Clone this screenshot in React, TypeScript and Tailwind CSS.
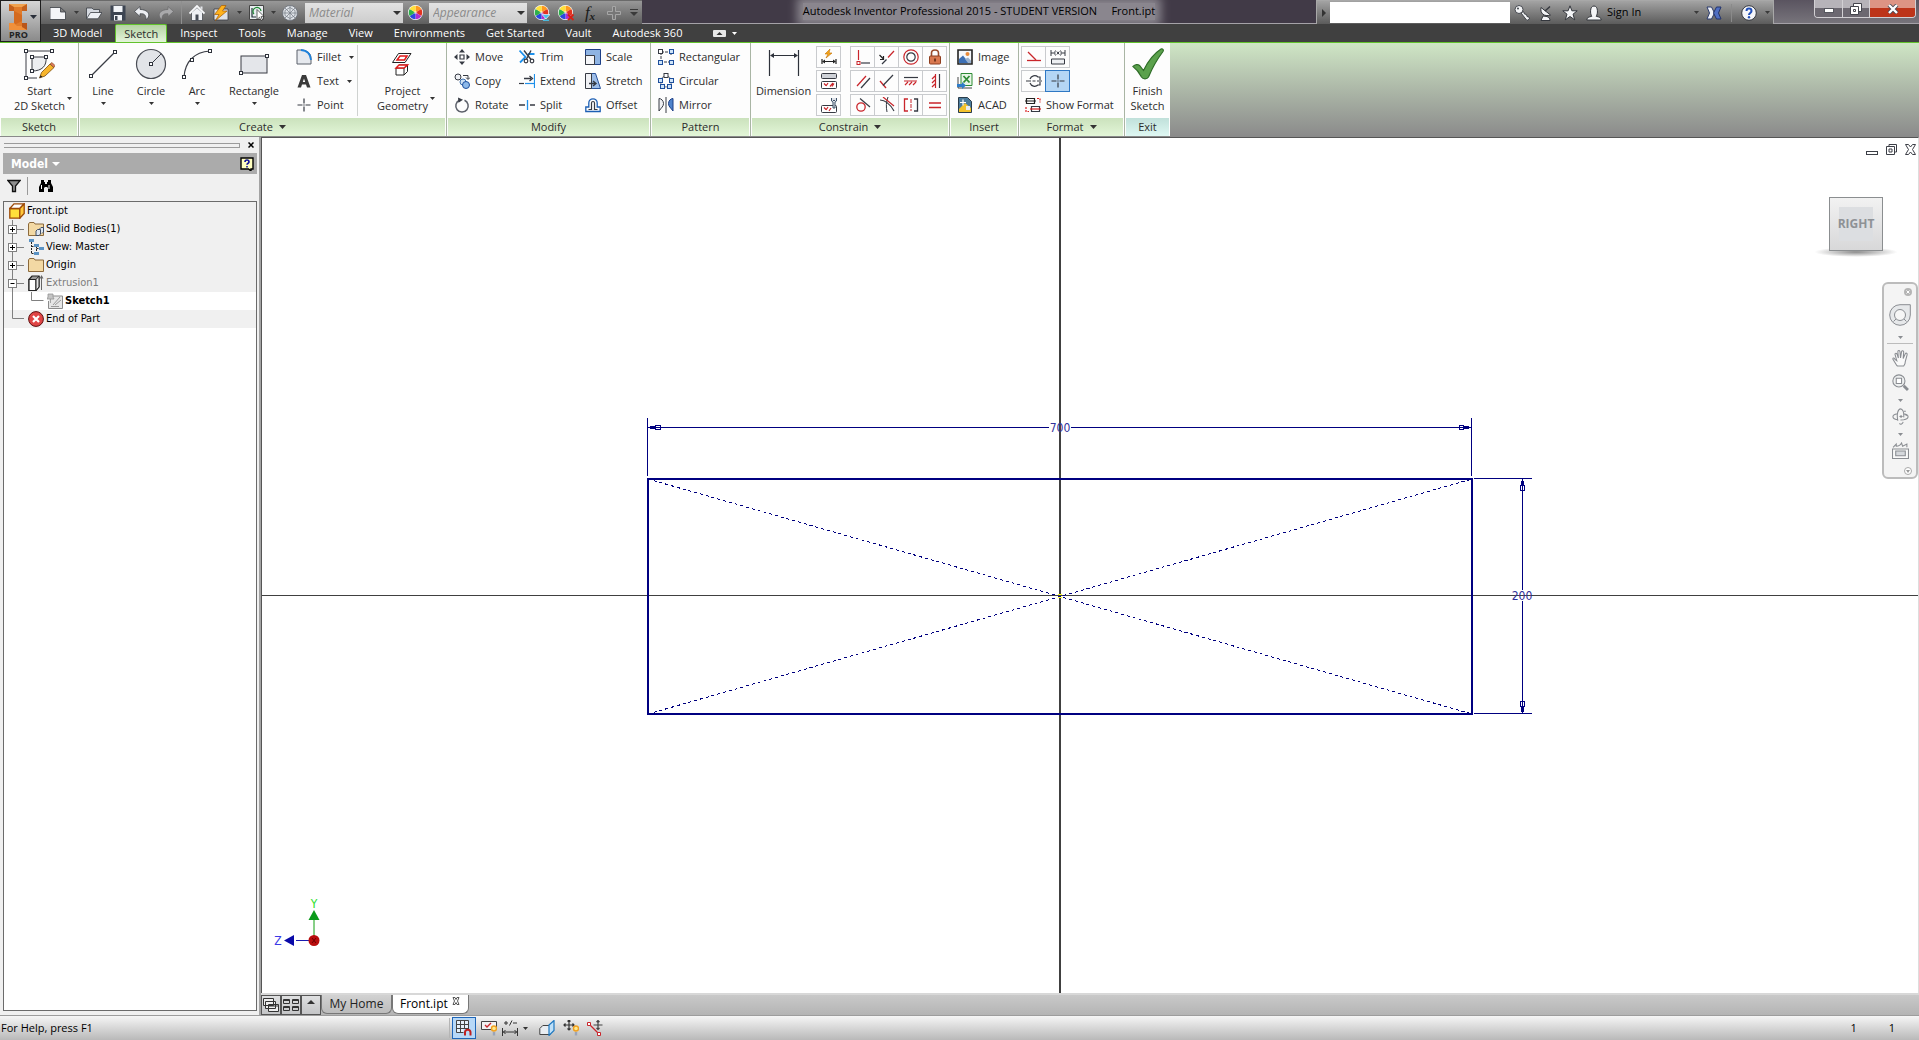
import React from "react";

type IconProps = { children: React.ReactNode; className?: string; box?: string };

function Icon({ children, className = "size-4", box = "0 0 16 16" }: IconProps) {
  return (
    <svg viewBox={box} fill="none" className={`shrink-0 ${className}`} aria-hidden>
      {children}
    </svg>
  );
}

function Caret({ className = "text-[#333]" }: { className?: string }) {
  return (
    <svg viewBox="0 0 5 3" className={`h-[3px] w-[5px] shrink-0 ${className}`} aria-hidden>
      <path d="M0 0h5L2.5 3z" fill="currentColor" />
    </svg>
  );
}

/* ---------- Quick access icons ---------- */

const wheel = (
  <>
    <circle cx="7.5" cy="7.5" r="7.500" fill="#fff" />
    <path d="M7.5 7.5V.8a6.7 6.7 0 0 1 5.8 3.3z" fill="#ff9a1f" />
    <path d="M7.5 7.5l5.8-3.4a6.7 6.7 0 0 1 0 6.8z" fill="#e2331f" />
    <path d="M7.5 7.5l5.8 3.4a6.7 6.7 0 0 1-5.8 3.3z" fill="#b02fd0" />
    <path d="M7.5 7.5v6.7a6.7 6.7 0 0 1-5.8-3.3z" fill="#2b49e0" />
    <path d="M7.5 7.5l-5.8 3.4a6.7 6.7 0 0 1 0-6.8z" fill="#2fb04b" />
    <path d="M7.5 7.5L1.7 4.1A6.7 6.7 0 0 1 7.5.8z" fill="#ffe23a" />
    <circle cx="7.5" cy="7.5" r="1.600" fill="#fff" opacity=".5" />
  </>
);

const qat = {
  fresh: (
    <path d="M0 2.500h10.500l5 4.500V14.500H0zM10.500 2.500V7h5" fill="#f4f5f8" stroke="#3a3d44" strokeWidth=".8" />
  ),
  open: (
    <>
      <path d="M.5 13.500V3h5.500l1.500 1.500h6V8" fill="#d5d9e0" stroke="#3a3d44" strokeWidth=".8" />
      <path d="M.5 13.800L4.500 7.500H16L12 13.800z" fill="#eceff4" stroke="#3a3d44" strokeWidth=".8" />
    </>
  ),
  save: (
    <>
      <path d="M.5.5h15v15H.5z" fill="#3d4552" />
      <path d="M3.500 1h9v6h-9zM4 10h8v5.500H4z" fill="#f2f4f8" />
      <path d="M5 11h2.500v4H5z" fill="#3d4552" />
    </>
  ),
  undo: (
    <path d="M6 1.500L.5 6.500l5.500 5V8.800c4-.4 6 .8 6 5.700 4-2 5-9.500-6-10.100z" fill="#eceef2" stroke="#3a3d44" strokeWidth=".7" />
  ),
  redo: (
    <path d="M10 1.500l5.500 5-5.500 5V8.800c-4-.4-6 .8-6 5.700C0 12.500-1 5 10 4.400z" fill="#a9a9ab" stroke="#6a6a6c" strokeWidth=".7" />
  ),
  home: (
    <>
      <path d="M2.500 7.500V15.500h11V7.500L8 2.500z" fill="#eef0f4" stroke="#3a3d44" strokeWidth=".7" />
      <path d="M.5 8.500L8 1l7.500 7.500" stroke="#f8f9fb" strokeWidth="1.800" />
      <path d="M6.500 9.500h3v6h-3z" fill="#444a55" />
      <path d="M11.500 1.500h2V5l-2-2z" fill="#e4e6ea" />
    </>
  ),
  update: (
    <>
      <path d="M1 4h14v11H1z" fill="#dfe2e8" stroke="#3a3d45" strokeWidth=".8" />
      <path d="M8.500.5h4.500L9.500 6H14L2.500 15.500 6 9.500H1.500z" fill="#ffb21c" stroke="#a85a00" strokeWidth=".7" />
    </>
  ),
  select: (
    <>
      <path d="M.5.5h14v14H.5z" fill="#e9edf0" stroke="#444" />
      <path d="M3 3v9h4" stroke="#22313a" strokeWidth="1.200" />
      <path d="M5 9a4 4 0 1 1 7-3" stroke="#1c8a33" strokeWidth="1.200" />
      <path d="M8 4.500l7 7-3 .2 1.500 3-1.500.8-1.500-3.200L8 14.500z" fill="#fff" stroke="#222" strokeWidth=".7" />
    </>
  ),
  sphere: (
    <>
      <circle cx="8" cy="8" r="7.500" fill="#dfe3e8" stroke="#666b73" strokeWidth=".8" />
      <path d="M3 3l10 10M13 3L3 13M8 .5v15M.5 8h15M3 5.500l5-3 5 3v5l-5 3-5-3z" stroke="#7c838c" strokeWidth=".8" />
    </>
  ),
  adjust: (
    <>
      {wheel}
      <path d="M8 9.500h8L12 14z" fill="#48c4ee" stroke="#fff" strokeWidth=".6" />
      <path d="M9 15.300h6" stroke="#48c4ee" strokeWidth="1.200" />
    </>
  ),
  clear: (
    <>
      {wheel}
      <path d="M10 9.500l5.500 5.500M15.500 9.500L10 15" stroke="#d81f12" strokeWidth="1.800" />
    </>
  ),
  plus: <path d="M6.500 1.500h3v5h5v3h-5v5h-3v-5h-5v-3h5z" fill="#777" stroke="#a6a6a6" strokeWidth="1" />,
};

/* ---------- Ribbon icons ---------- */

const node = (x: number, y: number) => (
  <rect x={x - 1.500} y={y - 1.500} width="3" height="3" fill="#fff" stroke="#2e323b" strokeWidth="1" />
);
const square = (x: number, y: number) => (
  <rect x={x - 1.500} y={y - 1.500} width="4" height="4" fill="#cfe4f8" stroke="#1d4e9c" strokeWidth="1" />
);

const big = {
  sketch: (
    <>
      <path d="M29 3H3v27h11" stroke="#3a3d45" />
      <path d="M9 9h14c1 9-4 14-14 14z" fill="#eceef1" stroke="#3a3d45" />
      {node(3, 3)}{node(29, 3)}{node(3, 30)}{node(9, 9)}{node(23, 9)}{node(9, 23)}
      <path d="M16.500 30l2-5.500L27 16l4 3.500-9 8.500z" fill="#f7b52c" stroke="#7a4c10" strokeWidth=".8" />
      <path d="M27 16l2-1.500 3 3L31 19.500z" fill="#e0795f" stroke="#7a4c10" strokeWidth=".6" />
      <path d="M16.500 30l1-2.800 2 1.600z" fill="#222" />
    </>
  ),
  line: <><path d="M4 28L28 4" stroke="#3a3d45" strokeWidth="1.200" />{node(4, 28)}{node(28, 4)}</>,
  circle: (
    <>
      <circle cx="16" cy="16" r="14.500" fill="#e2e4e8" stroke="#4a4d55" strokeWidth="1.200" />
      <path d="M16 16L26 6" stroke="#3a3d45" />
      {node(16, 16)}
    </>
  ),
  arc: <><path d="M3 29C4 14 13 4 29 3" stroke="#3a3d45" strokeWidth="1.200" />{node(3, 29)}{node(11, 12)}{node(29, 3)}</>,
  rect: <><rect x="3" y="8" width="26" height="17" fill="#e4e6ea" stroke="#3a3d45" />{node(3, 25)}{node(29, 8)}</>,
  project: (
    <>
      <path d="M12.500 5.500H25l-6 9H6.500z" fill="#fff" stroke="#222" />
      <path d="M14 8h7l-2.500 4h-7.500z" fill="#fff" stroke="#e01818" strokeWidth="1.500" />
      <path d="M10 20h8v7h-8zM10 20l3-3h8.500L18 20M21.500 17v6.500L18 27" fill="#fff" stroke="#222" />
      <path d="M10 20h8l3.500-3H13z" fill="#fff" stroke="#e01818" strokeWidth="1.400" />
    </>
  ),
  dimension: (
    <>
      <path d="M1.500 2v26M30.500 2v26M3 7.500h26" stroke="#2e323b" strokeWidth="1.200" />
      <path d="M2 7.500L6 5v5zM30 7.500L26 5v5z" fill="#2e323b" />
    </>
  ),
  check: (
    <path
      d="M1 18.500c2-2 5-2.500 6.500-1l4 5C16 13 22 5.500 29 1c1.500-.8 3 .8 2 2.500-6 8-11 17-14.500 25.500-1.500 2.500-5.500 2.500-7 0C7.500 25 5 21.500 1 18.500z"
      fill="#5ba14c"
      stroke="#2f6d28"
      strokeWidth="1.200"
    />
  ),
};

const ink = "#363a43";
const small: Record<string, React.ReactNode> = {
  Fillet: (
    <>
      <path d="M1 1h6c5 1 8 4 8 8v6H1z" fill="#e6e9ee" stroke="#5b606b" />
      <path d="M5 1c6 .4 9.500 4 10 10" stroke="#1e82dc" strokeWidth="1.800" />
    </>
  ),
  Text: <path d="M6 2h4l4.500 12.500H11l-1-3H6l-1 3H1.500zM8 5.500L6.800 9h2.400z" fill="#3a3a3a" />,
  Point: <path d="M8 1.500v5M8 9.500v5M1.500 8h5M9.500 8h5M7.300 8h1.400" stroke={ink} strokeWidth="1.200" />,
  Move: (
    <>
      <path d="M6 6h4v4H6z" stroke={ink} strokeWidth="1.200" />
      <path d="M8 0l3 3.500H5zM8 16l3-3.500H5zM0 8l3.500-3v6zM16 8l-3.500-3v6z" fill={ink} />
    </>
  ),
  Copy: (
    <>
      <circle cx="4" cy="4" r="3" fill="#eef0f4" stroke={ink} />
      <path d="M9 2.500h5v3.500M12 4.500l2 2 2-2" stroke={ink} />
      <circle cx="9" cy="9" r="3" fill="#cfe2f6" stroke="#3c6fae" />
      <circle cx="12" cy="12" r="3.500" fill="#8db9ea" stroke="#1d4e9c" />
    </>
  ),
  Rotate: (
    <>
      <path d="M5.500 3.200a6.200 6.200 0 1 0 5 0" stroke="#5c606a" strokeWidth="1.500" />
      <path d="M4 .5l5 2.300-4.500 3z" fill={ink} />
    </>
  ),
  Trim: (
    <>
      <path d="M.5 1.500l6 6.500-5.500 5.500" stroke="#1e90ea" strokeWidth="1.800" />
      <path d="M9 5h6.500" stroke="#1e90ea" strokeWidth="2" />
      <path d="M5 1.500l7 9M12 1.500L7.500 10" stroke={ink} strokeWidth="1.400" />
      <circle cx="7" cy="12" r="1.800" stroke={ink} strokeWidth="1.200" />
      <circle cx="13" cy="12" r="1.800" stroke={ink} strokeWidth="1.200" />
    </>
  ),
  Extend: (
    <>
      <path d="M15.500 1v14" stroke="#1e90ea" strokeWidth="1.200" />
      <path d="M0 10.500h5" stroke={ink} strokeWidth="1.200" />
      <path d="M6 10.500h9" stroke="#1e90ea" strokeWidth="1.200" />
      <path d="M5 5.500h7M10.500 3l3 2.500-3 2.500" stroke={ink} strokeWidth="1.300" />
    </>
  ),
  Split: (
    <>
      <path d="M0 8h6M11 8h5" stroke={ink} strokeWidth="1.300" />
      <path d="M8.500 3v10" stroke="#1e90ea" strokeWidth="1.300" />
    </>
  ),
  Scale: (
    <>
      <path d="M.5.500h15v15H.5z" fill="#8fb4e3" stroke="#1d3f86" />
      <path d="M.5 6.500h9v9h-9z" fill="#f4f5f8" stroke={ink} />
    </>
  ),
  Stretch: (
    <>
      <path d="M6 .5h4.500L15.500 15.500H6z" fill="#9dbde8" stroke="#2a5299" />
      <path d="M.5.500h6v15h-6z" fill="#f0f1f4" stroke={ink} />
      <path d="M4 10.500h6M8 8l3 2.500L8 13" stroke={ink} strokeWidth="1.400" />
    </>
  ),
  Offset: (
    <>
      <path d="M.8 14.500V10h3V6a4.200 4.200 0 0 1 8.400 0v4h3v4.500z" stroke="#1d5fb4" strokeWidth="1.300" />
      <path d="M3.500 12.500h3V6a1.500 1.500 0 0 1 3 0v6.500h3" stroke={ink} strokeWidth="1.200" />
    </>
  ),
  Rectangular: (
    <>
      <path d="M3 3h10M3 3v10M13 13H6M13 3v3" stroke={ink} strokeDasharray="3 1" />
      <rect x=".5" y=".5" width="4" height="4" fill="#fff" stroke={ink} />
      {square(13, 2)}{square(2, 13)}{square(13, 13)}
    </>
  ),
  Circular: (
    <>
      <circle cx="8" cy="8.500" r="5.500" stroke="#6b7079" />
      <rect x="6" y=".5" width="4" height="4" fill="#fff" stroke={ink} />
      {square(2, 7)}{square(13, 7)}{square(4, 13)}{square(11, 13)}
    </>
  ),
  Mirror: (
    <>
      <path d="M1 1.500c2 0 4.500 2 4.500 5s-2 4-4.500 7.500z" fill="#f0f1f4" stroke={ink} />
      <path d="M8 0v16" stroke={ink} />
      <path d="M15 1.500c-2 0-4.500 2-4.500 5s2 4 4.500 7.500z" fill="#4f83cc" stroke="#1d3f86" />
    </>
  ),
  Image: (
    <>
      <path d="M1 1h14v14H1z" fill="#f6f8fb" stroke="#222" strokeWidth="1.600" />
      <path d="M2 10l4-3.500L12 14H2z" fill="#3c6fb4" />
      <path d="M8 10l3-1.500 3 3V14h-3z" fill="#9ab2cf" />
      <circle cx="10.500" cy="5" r="2" fill="#e88a3a" />
    </>
  ),
  Points: (
    <>
      <path d="M4 .500h11v12H4z" fill="#e8f5e6" stroke="#2c8a33" />
      <path d="M6.500 3l6 6.500M12.500 3l-6 6.500" stroke="#2c8a33" strokeWidth="1.800" />
      <path d="M1 4v11h14" stroke="#444" />
      <path d="M0 11h5V9l4 3.500L5 16v-2H0z" fill="#2e7cc8" />
    </>
  ),
  ACAD: (
    <>
      <path d="M1.500.500h9l4 4v11h-13z" fill="#4c7c9d" stroke="#2a3c4a" />
      <path d="M2 12l6-6 6 5v4H2z" fill="#f2c22c" />
      <path d="M6 2.500v6M3 5.500h6" stroke="#fff" strokeWidth="1.200" />
      <path d="M9 9h4v4H9z" fill="#e9ecef" />
    </>
  ),
  "Show Format": (
    <>
      <path d="M1.500 1.500h8v5h-8zM0 4h11" stroke="#222" strokeWidth="1.200" />
      <path d="M6.500 9.500h8v5h-8z" stroke={ink} strokeWidth="1.200" />
      <path d="M5 12h11" stroke="#d91e1e" strokeWidth="1.200" />
      <path d="M12 1.500h3v4M1 10v4.500h3" stroke="#d91e1e" strokeWidth="1.200" strokeDasharray="2 1" />
    </>
  ),
};

const red = "#c9252b";
const lock = (
  <>
    <path d="M4.500 7V4a3.500 3 0 0 1 7 0v3" stroke="#9a4a2a" strokeWidth="1.600" />
    <rect x="2.500" y="7" width="11" height="8" rx="1" fill="#d9784f" stroke="#8f3f20" />
    <path d="M8 9.500v3" stroke="#4a1c0a" strokeWidth="1.400" />
  </>
);

const constrainSide: [string, React.ReactNode][] = [
  ["Auto dimension", <>
    <path d="M9 0L4 5h3l-2 4 6-5H8z" fill="#f6a81c" stroke="#c46e00" strokeWidth=".6" />
    <path d="M1 10v5M15 10v5M2 12.500h12" stroke="#222" strokeWidth="1.200" />
    <path d="M1 12.500l3-2v4zM15 12.500l-3-2v4z" fill="#222" />
  </>],
  ["Show constraints", <>
    <rect x=".5" y=".5" width="15" height="5" rx="1" fill="#cfd2d8" stroke={ink} />
    <rect x=".5" y="8.500" width="15" height="7" rx="1" fill="#fff" stroke={ink} />
    <path d="M3 10.500l2 2M7 10l-2 3M12 10l-3 3.500M13 10.500l-2 3" stroke={red} strokeWidth="1.200" />
  </>],
  ["Constraint settings", <>
    <rect x=".5" y="8.500" width="15" height="7" rx="1" fill="#fff" stroke={ink} />
    <path d="M3 10.500l2 2M7 10l-2 3M10 11l-2 3" stroke={red} strokeWidth="1.200" />
    <path d="M10.500 1v3l1.500 1v6h2V5l1.500-1V1M12 3.500h2" fill="#dfe2e8" stroke="#3b5067" strokeWidth="1" />
  </>],
];

const constraints: [string, React.ReactNode][][] = [
  [
    ["Coincident", <><path d="M3.500 1v10" stroke={red} strokeWidth="1.200" /><path d="M6 14h9" stroke={ink} strokeWidth="1.200" /><rect x="2" y="12.500" width="3" height="3" stroke={red} /></>],
    ["Collinear", <><path d="M.5 6l4 4M4.500 7v3.500H1" stroke="#222" strokeWidth="1.200" /><path d="M3 15l4.500-4.500" stroke={ink} strokeWidth="1.200" /><path d="M9 8.500L15 2" stroke={red} strokeWidth="1.200" /></>],
    ["Concentric", <><circle cx="8" cy="8" r="7.200" stroke={red} strokeWidth="1.200" /><circle cx="8" cy="8" r="4.200" stroke={ink} strokeWidth="1.200" /></>],
    ["Fix", lock],
  ],
  [
    ["Parallel", <><path d="M2 13L11 3" stroke={red} strokeWidth="1.200" /><path d="M6 15l9-10" stroke={ink} strokeWidth="1.200" /></>],
    ["Perpendicular", <><path d="M1 8l6 7" stroke={red} strokeWidth="1.300" /><path d="M4 12.500L14 2" stroke={ink} strokeWidth="1.200" /></>],
    ["Horizontal", <><path d="M1 4.500h14" stroke={ink} strokeWidth="1.200" /><path d="M1 8h13M5 9l-3 3M9 9l-3 3M13 9l-3 3" stroke={red} strokeWidth="1.200" /></>],
    ["Vertical", <><path d="M12.500 1v14" stroke={ink} strokeWidth="1.200" /><path d="M8.500 1v14M8 3L5 6M8 7l-3 3M8 11l-3 3" stroke={red} strokeWidth="1.200" /></>],
  ],
  [
    ["Tangent", <><circle cx="6" cy="10" r="4.200" stroke={red} strokeWidth="1.300" /><path d="M5 1.500L15 10" stroke={ink} strokeWidth="1.200" /></>],
    ["Smooth", <><path d="M1 3c6 0 10 4 14 11" stroke={ink} strokeWidth="1.200" /><path d="M9 0c-2 5-2 10-1 15" stroke={ink} /><path d="M4 0l11 9" stroke={red} strokeWidth="1.200" /></>],
    ["Symmetric", <><path d="M5 2H1.500v12H5" stroke={red} strokeWidth="1.300" /><path d="M11 2h3.500v12H11" stroke={ink} strokeWidth="1.300" /><path d="M8 2v12" stroke={red} strokeDasharray="4 1" /></>],
    ["Equal", <path d="M2 6h12M2 10.500h12" stroke={red} strokeWidth="1.300" />],
  ],
];

const formats: [string, React.ReactNode][][] = [
  [
    ["Construction", <><path d="M2 3l8 8" stroke={red} strokeWidth="1.300" /><path d="M1 11.500h14" stroke={red} strokeWidth="1.300" /></>],
    ["Driven dimension", <><path d="M1 1v6M15 1v6M1 4h3M12 4h3M5.500 1.500C4.500 3 4.500 5 5.500 6.500M10.500 1.500c1 1.500 1 3.500 0 5M6.800 2.500l2.500 3M9.300 2.500l-2.500 3" stroke={ink} /><path d="M1.500 10h13v5h-13z" fill="#eef0f3" stroke={ink} /></>],
  ],
  [
    ["Centerline", <><path d="M4 6a5 5 0 0 1 8-2h2v3M4 10a5 5 0 0 0 8 2h2V9" stroke={ink} strokeWidth="1.200" /><path d="M0 8h5M6.500 8h3M11 8h5" stroke={ink} strokeWidth="1.200" /></>],
    ["Center point", <path d="M8 1.500v5M8 9.500v5M1.500 8h5M9.500 8h5M7.300 8h1.400" stroke={ink} strokeWidth="1.200" />],
  ],
];

/* ---------- Ribbon pieces ---------- */

type PanelProps = { title: string; width: string; menu?: boolean; exit?: boolean; children: React.ReactNode };

function Panel({ title, width, menu, exit, children }: PanelProps) {
  return (
    <section className={`flex shrink-0 flex-col bg-[#fdfdfd] ${exit ? "" : "border-r border-[#a9b5a4]"} ${width}`}>
      <div className="flex h-[75px]">{children}</div>
      <h2
        className={`mx-px flex h-[18px] items-center justify-center gap-1.5 bg-linear-to-b ${
          exit ? "from-[#c0e0da] to-[#dff8f3]" : "from-[#cbe2bd] to-[#e3f6d8]"
        }`}
      >
        {title}
        {menu && (
          <svg viewBox="0 0 7 4" className="h-1 w-[7px]" aria-hidden>
            <path d="M0 0h7L3.500 4z" fill="#333" />
          </svg>
        )}
      </h2>
    </section>
  );
}

type LargeProps = { icon: React.ReactNode; lines: string[]; width: string; menu?: "below" | "side" };

function LargeButton({ icon, lines, width, menu }: LargeProps) {
  return (
    <button className={`flex shrink-0 flex-col items-center pt-[5px] ${width}`}>
      <Icon box="0 0 32 32" className="size-8">{icon}</Icon>
      <span className={`mt-[3px] flex items-center gap-0.5 leading-[15px] ${menu === "side" ? "pl-2" : ""}`}>
        <span>
          {lines.map((line) => (
            <span key={line} className="block whitespace-nowrap">{line}</span>
          ))}
        </span>
        {menu === "side" && <Caret />}
      </span>
      {menu === "below" && <span className="mt-1"><Caret /></span>}
    </button>
  );
}

function SmallButton({ name, menu }: { name: string; menu?: boolean }) {
  return (
    <button className="flex h-6 items-center gap-[5px] whitespace-nowrap">
      <Icon>{small[name]}</Icon>
      {name}
      {menu && <span className="ml-[3px]"><Caret /></span>}
    </button>
  );
}

function ToolGrid({ rows, active }: { rows: [string, React.ReactNode][][]; active?: string }) {
  return (
    <>
      {rows.map((row, i) => (
        <div key={i} className="flex h-[22px]">
          {row.map(([label, icon]) => (
            <button
              key={label}
              aria-label={label}
              className={`-mr-px flex w-[25px] items-center justify-center border ${
                label === active ? "z-10 border-[#2f78c4] bg-[#b4d6f5]" : "border-[#c9cbce]"
              }`}
            >
              <Icon>{icon}</Icon>
            </button>
          ))}
        </div>
      ))}
    </>
  );
}

/* ---------- Header ---------- */

function QatButton({ label, children }: { label: string; children: React.ReactNode }) {
  return (
    <button aria-label={label} className="flex w-6 items-center justify-center">
      <Icon>{children}</Icon>
    </button>
  );
}

function QatCaret({ label, width = "w-3" }: { label: string; width?: string }) {
  return (
    <button aria-label={label} className={`flex items-center justify-center ${width}`}>
      <Caret className="text-[#3a3a3a]" />
    </button>
  );
}

function StyleSelect({ name }: { name: string }) {
  return (
    <span className="relative flex">
      <select
        aria-label={name}
        className="h-5 w-[98px] appearance-none bg-linear-to-b from-[#e2e2e2] to-[#cdcdcd] pl-1 text-[12px] text-[#8b8b8b] italic"
      >
        <option>{name}</option>
      </select>
      <svg viewBox="0 0 8 4" className="pointer-events-none absolute top-2 right-0.5 h-1 w-2" aria-hidden>
        <path d="M0 0h8L4 4z" fill="#333" />
      </svg>
    </span>
  );
}

function QuickAccess() {
  return (
    <div className="flex h-6 items-stretch border-t border-[#6a6a6a] bg-linear-to-b from-[#989898] to-[#5f5f5f] pl-[5px]">
      <QatButton label="New">{qat.fresh}</QatButton>
      <QatCaret label="New options" />
      <QatButton label="Open">{qat.open}</QatButton>
      <QatButton label="Save">{qat.save}</QatButton>
      <QatButton label="Undo">{qat.undo}</QatButton>
      <QatButton label="Redo">{qat.redo}</QatButton>
      <span className="mx-[3px] w-px bg-[#8f8f8f]" />
      <QatButton label="Home">{qat.home}</QatButton>
      <QatButton label="Update">{qat.update}</QatButton>
      <QatCaret label="Update options" />
      <QatButton label="Select">{qat.select}</QatButton>
      <QatCaret label="Select options" width="w-2" />
      <div className="flex items-stretch pl-px">
        <QatButton label="Material browser">{qat.sphere}</QatButton>
      </div>
      <div className="flex items-center pr-[3px] pl-[3px]">
        <StyleSelect name="Material" />
        <span className="flex w-[26px] justify-center">
          <QatButton label="Appearance browser">{wheel}</QatButton>
        </span>
        <StyleSelect name="Appearance" />
      </div>
      <QatButton label="Adjust">{qat.adjust}</QatButton>
      <QatButton label="Clear">{qat.clear}</QatButton>
      <button className="w-6 font-['Liberation_Serif',serif] text-[17px] leading-5 text-[#1b1b1b] italic">
        f<sub className="text-[11px] font-bold">x</sub>
      </button>
      <QatButton label="Add">{qat.plus}</QatButton>
      <button aria-label="Customize" className="flex w-4 flex-col items-center justify-center gap-0.5">
        <span className="h-px w-2 bg-[#3a3a3a]" />
        <svg viewBox="0 0 8 4" className="h-1 w-2" aria-hidden><path d="M0 0h8L4 4z" fill="#3a3a3a" /></svg>
      </button>
    </div>
  );
}

function InfoCenter() {
  return (
    <div className="flex h-6 w-[458px] items-center border-x border-t border-[#a8a8a8] bg-linear-to-b from-[#a3a3a3] to-[#5c5c5c]">
      <button aria-label="Collapse search" className="flex w-[13px] justify-center">
        <svg viewBox="0 0 4 8" className="h-2 w-1" aria-hidden><path d="M0 0l4 4-4 4z" fill="#333" /></svg>
      </button>
      <input aria-label="Search help" className="h-[21px] w-[180px] bg-white px-1" />
      <div className="flex flex-1 items-center">
        <QatButton label="Search">
          <circle cx="5" cy="4.500" r="4" fill="#f4f5f7" stroke="#44474e" />
          <path d="M7 8l6 7.500 2.500-1.500-.5-2-2-.5-.5-2-2-.5-1-2.500z" fill="#f4f5f7" stroke="#44474e" />
          <circle cx="4" cy="3.500" r="1" fill="#44474e" />
        </QatButton>
        <QatButton label="Subscription">
          <path d="M3 2.500c-1 6 3 9.500 9.500 7.500z" fill="#f4f5f7" stroke="#33363c" />
          <path d="M7 6l5-4.500" stroke="#33363c" strokeWidth="1.400" />
          <path d="M5 11l-2 4.500h9c0-2-1-3-3-4z" fill="#f4f5f7" stroke="#33363c" />
        </QatButton>
        <QatButton label="Favorites">
          <path d="M8 .8l1.900 5h5.300L11 9.200l1.700 5.600L8 11.500l-4.700 3.300L5 9.200.8 5.800h5.300z" fill="#f4f5f7" stroke="#33363c" />
        </QatButton>
        <button className="flex flex-1 items-center gap-[5px] pl-1 text-black">
          <Icon>
            <path d="M.8 15c0-2.500 2-3 5-3.700C4 9 3.700 1 8 1s4 8 2.200 10.300c3 .7 5 1.200 5 3.700z" fill="#f4f5f7" stroke="#33363c" />
          </Icon>
          Sign In
        </button>
        <QatCaret label="Account options" />
        <QatButton label="Exchange apps">
          <path d="M1 2h4.500l3 6-3 6H1l2.500-6z" fill="#eef0f6" stroke="#2b3b6e" />
          <path d="M15 2h-4.500l-3 6 3 6H15l-2.500-6z" fill="#4f6ec2" stroke="#22326b" />
        </QatButton>
        <span className="mx-[5px] h-[18px] w-px bg-[#8a8a8a]" />
        <QatButton label="Help">
          <circle cx="8" cy="8" r="7.300" fill="#f6f7fa" stroke="#33363c" />
          <path d="M5.500 6c0-3.300 5-3.300 5 0 0 2-2.500 2-2.500 4" stroke="#2350b8" strokeWidth="2" />
          <circle cx="8" cy="12.300" r="1.200" fill="#2350b8" />
        </QatButton>
        <QatCaret label="Help options" />
      </div>
    </div>
  );
}

function WindowButtons() {
  return (
    <div className="mr-[3px] ml-10 flex h-[18px] overflow-hidden rounded-b-sm border-x border-b border-[#d2d0d4]">
      <button aria-label="Minimize" className="flex w-[28px] items-end justify-center border-r border-[#d2d0d4] bg-linear-to-b from-[#b6b3b9] from-50% to-[#6c6871] to-50% pb-1">
        <Icon className="h-[5px] w-2.5" box="0 0 10 5"><rect x=".5" y=".5" width="9" height="4" fill="#fff" stroke="#55565e" /></Icon>
      </button>
      <button aria-label="Restore" className="flex w-[27px] items-center justify-center border-r border-[#d2d0d4] bg-linear-to-b from-[#b6b3b9] from-50% to-[#6c6871] to-50%">
        <Icon className="size-3" box="0 0 12 12"><path d="M3.500.500h8v8h-8z" fill="#fff" stroke="#44454d" /><path d="M.5 3.500h8v8h-8z" fill="#fff" stroke="#44454d" /><path d="M3.500 6.500h2v2h-2z" stroke="#44454d" /></Icon>
      </button>
      <button aria-label="Close" className="flex w-[45px] items-center justify-center bg-linear-to-b from-[#dd9484] from-50% to-[#bd3419] to-50%">
        <Icon className="h-2.5 w-3" box="0 0 12 10">
          <path d="M2 1l8 8M10 1L2 9" stroke="#4a4b55" strokeWidth="4" />
          <path d="M2 1l8 8M10 1L2 9" stroke="#fff" strokeWidth="2.400" />
        </Icon>
      </button>
    </div>
  );
}

const tabs = ["3D Model", "Sketch", "Inspect", "Tools", "Manage", "View", "Environments", "Get Started", "Vault", "Autodesk 360"];

function Header() {
  return (
    <header className="flex border-b border-[#62c22c] bg-[#404040]">
      <button className="flex w-[41px] shrink-0 flex-col items-center border border-[#1e1e1e] bg-linear-to-b from-[#d5d5d5] to-[#8a8a8a] pt-[3px]">
        <span className="flex items-center gap-[3px] pl-1">
          <Icon box="0 0 18 26" className="h-[26px] w-[18px]">
            <path d="M0 0h18v7H0z" fill="#f0a24f" />
            <path d="M0 0l5 3v4H0zM18 0l-5 3v4h5z" fill="#c4601c" />
            <path d="M5 3h8v20H5z" fill="#e07b2a" />
            <path d="M5 7l8 4v6l-8 4z" fill="#d46a1e" />
            <path d="M0 19h5l3 3h5l5-3v7H0z" fill="#f0903a" />
            <path d="M13 19h5v7l-5-3z" fill="#b9561a" />
          </Icon>
          <svg viewBox="0 0 7 4" className="h-1 w-[7px]" aria-hidden><path d="M0 0h7L3.500 4z" fill="#2a2f3a" /></svg>
        </span>
        <span className="pr-1 text-[9px] leading-[9px] font-bold text-[#222]">PRO</span>
      </button>
      <div className="flex min-w-0 flex-1 flex-col">
        <div className="flex h-6 bg-[#413a47]">
          <QuickAccess />
          <h1 className="flex flex-1 items-center justify-center overflow-hidden border-b border-[#a5a2a8] whitespace-pre text-black">
            <span className="bg-[#8a868e] shadow-[0_0_10px_6px_#8a868e]">
              {"Autodesk Inventor Professional 2015 - STUDENT VERSION     Front.ipt"}
            </span>
          </h1>
          <InfoCenter />
          <div className="border-b border-[#a5a2a8] bg-linear-to-b from-[#5a5460] to-[#77747b]">
            <WindowButtons />
          </div>
        </div>
        <nav className="flex h-[18px] items-end gap-px pl-0.5 text-white">
          {tabs.map((tab) => (
            <button
              key={tab}
              className={
                tab === "Sketch"
                  ? "mx-0.5 h-[18px] rounded-t-xs border border-b-0 border-[#62c22c] bg-linear-to-b from-[#b5d3a3] to-[#e4f4da] px-2 leading-4 text-[#2c2c2c]"
                  : "h-[18px] px-2.5 leading-[18px]"
              }
            >
              {tab}
            </button>
          ))}
          <button aria-label="Minimize ribbon" className="ml-5 flex h-[18px] items-center gap-1.5">
            <svg viewBox="0 0 13 7" className="h-[7px] w-[13px]" aria-hidden>
              <rect width="13" height="7" rx="1" fill="#e8e8e8" />
              <path d="M3.500 5L6.500 2l3 3z" fill="#333" />
            </svg>
            <Caret className="text-white" />
          </button>
        </nav>
      </div>
    </header>
  );
}

function Ribbon() {
  return (
    <div className="flex border-b border-[#8a8a8a] bg-linear-to-b from-[#cfe6c5] to-[#8b8b8b]">
      <Panel title="Sketch" width="w-[79px]">
        <LargeButton icon={big.sketch} lines={["Start", "2D Sketch"]} width="w-[78px]" menu="side" />
      </Panel>
      <Panel title="Create" width="w-[368px]" menu>
        <LargeButton icon={big.line} lines={["Line"]} width="w-12" menu="below" />
        <LargeButton icon={big.circle} lines={["Circle"]} width="w-12" menu="below" />
        <LargeButton icon={big.arc} lines={["Arc"]} width="w-11" menu="below" />
        <LargeButton icon={big.rect} lines={["Rectangle"]} width="w-[70px]" menu="below" />
        <div className="my-0.5 w-[76px] border-r border-[#cfd2d0] pl-[7px]">
          <SmallButton name="Fillet" menu />
          <SmallButton name="Text" menu />
          <SmallButton name="Point" />
        </div>
        <LargeButton icon={big.project} lines={["Project", "Geometry"]} width="w-[88px]" menu="side" />
      </Panel>
      <Panel title="Modify" width="w-[204px]">
        <div className="grid flex-1 auto-rows-[24px] grid-cols-[65px_66px_1fr] pt-0.5 pl-[7px]">
          {["Move", "Trim", "Scale", "Copy", "Extend", "Stretch", "Rotate", "Split", "Offset"].map((name) => (
            <SmallButton key={name} name={name} />
          ))}
        </div>
      </Panel>
      <Panel title="Pattern" width="w-[100px]">
        <div className="pt-0.5 pl-[7px]">
          {["Rectangular", "Circular", "Mirror"].map((name) => (
            <SmallButton key={name} name={name} />
          ))}
        </div>
      </Panel>
      <Panel title="Constrain" width="w-[199px]" menu>
        <LargeButton icon={big.dimension} lines={["Dimension"]} width="w-[65px]" />
        <div className="mr-2.5 flex flex-col gap-0.5 pt-[3px]">
          <ToolGrid rows={constrainSide.map((item) => [item])} />
        </div>
        <div className="flex flex-col gap-0.5 pt-[3px]">
          <ToolGrid rows={constraints} />
        </div>
      </Panel>
      <Panel title="Insert" width="w-[69px]">
        <div className="pt-0.5 pl-[7px]">
          {["Image", "Points", "ACAD"].map((name) => (
            <SmallButton key={name} name={name} />
          ))}
        </div>
      </Panel>
      <Panel title="Format" width="w-[106px]" menu>
        <div className="flex flex-col gap-0.5 pt-[3px] pl-0.5">
          <ToolGrid rows={formats} active="Center point" />
          <div className="flex h-[22px] items-center pl-1">
            <SmallButton name="Show Format" />
          </div>
        </div>
      </Panel>
      <Panel title="Exit" width="w-[45px]" exit>
        <LargeButton icon={big.check} lines={["Finish", "Sketch"]} width="w-[45px]" />
      </Panel>
    </div>
  );
}

/* ---------- Model browser ---------- */

function Expander({ open }: { open?: boolean }) {
  return (
    <Icon box="0 0 20 18" className="h-[18px] w-5">
      <path d="M4.500 0v18M9 9.500h7" stroke="#808080" />
      <rect x=".5" y="5.500" width="8" height="8" fill="#fff" stroke="#808080" />
      <path d={open ? "M2.500 9.500h4" : "M2 9.500h5M4.500 7v5"} stroke="#000" />
    </Icon>
  );
}

const folder = <path d="M.5 3V14.500h15V3H7L6 1.500H1.500z" fill="#f3d9a4" stroke="#8c6a3c" />;

const treeIcons = {
  part: (
    <>
      <path d="M.8 5.500h10v9.700H.8z" fill="#ffe03a" stroke="#9c4a08" strokeWidth="1.300" />
      <path d="M.8 5.500L5 .8h10.200l-4.400 4.700z" fill="#fff" stroke="#9c4a08" strokeWidth="1.300" />
      <path d="M10.800 5.500L15.200.8v9.700l-4.400 4.700z" fill="#ffc83a" stroke="#9c4a08" strokeWidth="1.300" />
    </>
  ),
  bodies: (
    <>
      {folder}
      <path d="M8 10l1.500-1.500h3V13l-1.500 1.500H8zM11.500 8l1.500-1.500h2.500V11L14 12.500" fill="#dfe6ef" stroke="#3f4f68" />
    </>
  ),
  view: (
    <>
      <path d="M3.500 3v11M3.500 14.500h2M3.500 7.500h3M8.500 7v7M8.500 14h2M8.500 9.500h3" stroke="#222" strokeDasharray="2 1" />
      <path d="M1 0h5v3H1zM6 5h5v3H6zM11 8h5v3h-5zM6 13h5v3H6z" fill="#5b93c4" />
    </>
  ),
  extrusion: (
    <>
      <path d="M1 4.500L4 1h7v11l-3 3.500H1z" fill="#9a9a9a" stroke="#222" strokeWidth="1.200" />
      <path d="M1 4.500h7v11H1z" fill="#fff" stroke="#222" strokeWidth="1.200" />
      <path d="M8 4.500L11 1v11l-3 3.500z" fill="#e6e6e6" stroke="#222" />
      <path d="M13.500 2v13" stroke="#666" /><path d="M13.500 0l2 3.500h-4z" fill="#666" />
    </>
  ),
  sketch: (
    <>
      <path d="M3 3h12.500v12.500H1.500V8" fill="#e6e6e6" stroke="#8c8c8c" />
      <path d="M4 13.500h8M6 12l7-8M8 12l6-5" stroke="#9b9b9b" />
      <path d="M1 1h5v3l1 2H0l1-2zM3.500 6v4" fill="#c4c4c4" stroke="#949494" strokeWidth=".8" />
    </>
  ),
  end: (
    <>
      <circle cx="8" cy="8" r="7.400" fill="#e04545" stroke="#5e1010" />
      <path d="M5 5l6 6M11 5l-6 6" stroke="#fff" strokeWidth="2.200" />
    </>
  ),
};

function TreeRow({ icon, label, guide, className = "" }: { icon: React.ReactNode; label: string; guide?: React.ReactNode; className?: string }) {
  return (
    <li className={`flex h-[18px] items-center pl-1 ${className || "bg-[#f0f0f0]"}`}>
      {guide}
      <Icon>{icon}</Icon>
      <span className="pt-px pl-0.5">{label}</span>
    </li>
  );
}

function ModelBrowser() {
  return (
    <aside className="flex w-[261px] shrink-0 flex-col border-r-2 border-[#a3a3a3] bg-[#f0f0f0] pt-[3px] pr-px pb-1 pl-[3px] font-['DejaVu_Sans_Condensed',sans-serif] text-[11px] text-black">
      <div className="flex h-2.5 items-center gap-2 pl-px">
        <span className="h-[5px] flex-1 border-y border-r border-[#9b9b9b]" />
        <button aria-label="Close browser" className="mr-1">
          <Icon box="0 0 6 6" className="size-1.5"><path d="M.5.500l5 5M5.500.500l-5 5" stroke="#000" strokeWidth="1.500" /></Icon>
        </button>
      </div>
      <div className="mt-[3px] mr-px flex h-[21px] items-center justify-between bg-[#ababab] pr-[3px] pl-2">
        <button className="flex items-center gap-1 text-[12px] font-bold text-white">
          Model
          <svg viewBox="0 0 8 4" className="h-1 w-2" aria-hidden><path d="M0 0h8L4 4z" fill="#fff" /></svg>
        </button>
        <button aria-label="Browser help">
          <Icon className="size-3.5" box="0 0 14 14">
            <path d="M1 1h12v11h-2v2l-2.500-2H1z" fill="#ffffc0" stroke="#000" strokeWidth="1.400" />
            <path d="M5 5c0-2.600 4-2.600 4 0 0 1.300-2 1.200-2 2.800M7 9v1.600" stroke="#12129a" strokeWidth="1.600" />
          </Icon>
        </button>
      </div>
      <div className="flex h-[27px] items-center gap-1.5 pb-1 pl-1">
        <button aria-label="Filter">
          <Icon className="size-3.5" box="0 0 14 14">
            <path d="M.8 1.500h12.400L8.500 7v5.500h-3V7z" fill="#8e8e8e" stroke="#111" strokeWidth="1.300" />
          </Icon>
        </button>
        <span className="h-[18px] w-px bg-[#9a9a9a]" />
        <button aria-label="Find" className="ml-1">
          <Icon className="size-4">
            <path d="M3 2h3v2h1v2h2V4h1V2h3v3l2 4v5h-5v-4H9.500V9h-3v1H6v4H1V9l2-4z" fill="#000" />
            <path d="M3.500 7v4M11 7v4" stroke="#fff" />
          </Icon>
        </button>
      </div>
      <ul className="mr-px flex-1 border border-[#6b6b6b] bg-white">
        <li className="flex h-[18px] items-center gap-0.5 bg-[#f0f0f0] pl-[5px]">
          <Icon>{treeIcons.part}</Icon>
          <span className="pt-px">Front.ipt</span>
        </li>
        <TreeRow guide={<Expander />} icon={treeIcons.bodies} label="Solid Bodies(1)" />
        <TreeRow guide={<Expander />} icon={treeIcons.view} label="View: Master" />
        <TreeRow guide={<Expander />} icon={folder} label="Origin" />
        <TreeRow guide={<Expander open />} icon={treeIcons.extrusion} label="Extrusion1" className="bg-[#f0f0f0] text-[#7d7d7d]" />
        <TreeRow
          guide={
            <Icon box="0 0 39 18" className="h-[18px] w-[39px]">
              <path d="M4.500 0v18M23.500 0v8.500h12" stroke="#808080" />
            </Icon>
          }
          icon={treeIcons.sketch}
          label="Sketch1"
          className="bg-white font-bold"
        />
        <TreeRow
          guide={
            <Icon box="0 0 20 18" className="h-[18px] w-5">
              <path d="M4.500 0v8.500H16" stroke="#808080" />
            </Icon>
          }
          icon={treeIcons.end}
          label="End of Part"
        />
      </ul>
    </aside>
  );
}

/* ---------- Sketch canvas ---------- */

const navy = "#000080";

function Drawing() {
  return (
    <svg className="absolute inset-0 size-full font-['DejaVu_Sans_Condensed',sans-serif] text-[12px]" fill="none" shapeRendering="crispEdges">
      {/* axes */}
      <path d="M0 457.500H4000" stroke="#404040" />
      <path d="M798 0V4000" stroke="#404040" strokeWidth="2" />

      {/* construction diagonals */}
      <path d="M386 341L1210 576M386 576L1210 341" stroke={navy} strokeDasharray="3 3" />
      <rect x="386" y="341" width="824" height="235" stroke={navy} strokeWidth="2" />
      <path d="M796 456.500h4M796 459.500h4" stroke="#ffff20" />

      {/* horizontal dimension */}
      <path d="M385.500 280v58M1209.500 280v58M386 289.500h401M809 289.500h400" stroke={navy} />
      <path d="M388 288h5v3h-5zM1202 288h5v3h-5z" fill={navy} />
      <path d="M393.500 287.500h5v4h-5zM1197.500 287.500h4v4h-4z" stroke={navy} />
      <text x="798" y="294" textAnchor="middle" fill="#30309a">700</text>

      {/* vertical dimension */}
      <path d="M1212 340.500h58M1212 575.500h58M1260.500 341v111M1260.500 463v113" stroke={navy} />
      <path d="M1259 343h3v5h-3zM1259 569h3v5h-3z" fill={navy} />
      <path d="M1258.500 347.500h4v5h-4zM1258.500 563.500h4v5h-4z" stroke={navy} />
      <text x="1260" y="462" textAnchor="middle" fill="#30309a">200</text>
    </svg>
  );
}

function Triad() {
  return (
    <svg viewBox="0 0 52 56" className="absolute bottom-[42px] left-2.5 h-14 w-[52px] font-['DejaVu_Sans_Condensed',sans-serif] text-[12px]" fill="none" aria-hidden>
      <text x="42" y="13" textAnchor="middle" fill="#2be02b">Y</text>
      <text x="6" y="50" textAnchor="middle" fill="#3a3ae6">Z</text>
      <path d="M42 24v18" stroke="#10a010" />
      <path d="M42 15l5.500 10h-11z" fill="#0a9a1a" />
      <path d="M24 45.500h13" stroke="#1a1ab0" />
      <path d="M12 45.500l10-5.500v11z" fill="#0a0aa8" />
      <circle cx="42" cy="45.500" r="5.500" fill="#b80d0d" />
      <path d="M40 43l4 5M44 43l-4 5" stroke="#6a0000" />
    </svg>
  );
}

function NavBar() {
  return (
    <div className="absolute top-36 right-0 flex w-9 flex-col items-center rounded-md border-2 border-[#bcbcbc] bg-[#f4f4f4] pt-1 pb-0.5 text-[#8a8d92]">
      <button aria-label="Close navigation bar" className="self-end pr-1">
        <Icon box="0 0 8 8" className="size-2"><circle cx="4" cy="4" r="4" fill="#b5b5b5" /><path d="M2.500 2.500l3 3M5.500 2.500l-3 3" stroke="#fff" /></Icon>
      </button>
      <button aria-label="Steering wheel" className="mt-2 flex flex-col items-center gap-2.5">
        <Icon box="0 0 22 22" className="size-[22px]">
          <path d="M11 .700h10.300V11A10.300 10.300 0 1 1 11 .700z" fill="#e6e8ea" stroke="currentColor" />
          <circle cx="11" cy="11" r="5.500" fill="#f6f6f6" stroke="currentColor" />
          <path d="M4.500 17.500L7 15M17.500 17.500L15 15" stroke="currentColor" />
        </Icon>
        <Caret className="text-[#8a8d92]" />
      </button>
      <span className="mt-1 h-px w-[26px] bg-[#bcbcbc]" />
      <button aria-label="Pan" className="mt-1.5">
        <Icon className="size-[17px]">
          <path d="M4.500 14.500L.800 8.500c0-1.400 1.500-1.200 2 .3L4.500 10 2.800 4c0-1.300 1.500-1.300 2 0L6 7.500l-.5-6c.2-1.300 1.600-1.300 2 0L8 7.500l1-6c.4-1.300 1.800-1 2 .3L10.500 8l2-4.500c.7-1 2-.5 1.700 1L12.500 11c0 2-.5 2.500-1.500 4H5z" fill="#fafafa" stroke="currentColor" />
        </Icon>
      </button>
      <button aria-label="Zoom" className="mt-[7px] flex flex-col items-center gap-2">
        <Icon className="size-[17px]">
          <circle cx="6.500" cy="6.500" r="5.700" fill="#eef0f0" stroke="currentColor" />
          <path d="M4 4h5v5H4z" fill="#fff" stroke="currentColor" />
          <path d="M11 11l4 4" stroke="currentColor" strokeWidth="2.600" />
        </Icon>
        <Caret className="text-[#8a8d92]" />
      </button>
      <button aria-label="Orbit" className="mt-1.5 flex flex-col items-center gap-2">
        <Icon className="size-[17px]">
          <path d="M5 5.500C-.5 6.500-.5 10 5 11M11 5.500c5.500 1 5.500 4.500 0 5.500l-3 .3M5.500 12C4 5 6 .800 8 .800s3.500 3 3 8M7 14.500c1 1.500 3 .5 3.500-1.500" stroke="currentColor" />
          <path d="M7 8h3M8.500 6.500v3M11 3h2M12 6l2 1" stroke="currentColor" />
        </Icon>
        <Caret className="text-[#8a8d92]" />
      </button>
      <button aria-label="Look at" className="mt-1.5">
        <Icon className="size-[17px]">
          <path d="M.5 6.500h15v9H.5z" fill="#fafafa" stroke="currentColor" />
          <path d="M3.500 8.500h9v4.500h-9z" fill="#d5d8dc" stroke="currentColor" />
          <path d="M1 5l3-3v2c3 0 4-1 5-3l1 3 4-2v3" stroke="currentColor" />
        </Icon>
      </button>
      <button aria-label="Navigation bar options" className="mt-2 self-end pr-1">
        <Icon box="0 0 8 8" className="size-2"><circle cx="4" cy="4" r="3.500" fill="#fff" stroke="#a9a9a9" /><path d="M2 3h4L4 6z" fill="#999" /></Icon>
      </button>
    </div>
  );
}

function Canvas() {
  return (
    <main className="relative min-h-0 flex-1 overflow-hidden border-t border-r border-l border-t-[#555] border-r-[#ddd] border-l-[#555] bg-white">
      <Drawing />
      <Triad />
      <div className="absolute top-1.5 right-0.5 flex items-end gap-2 text-[#3c3f47]">
        <button aria-label="Minimize document"><Icon box="0 0 12 4" className="h-1 w-3"><rect x=".5" y=".5" width="11" height="3" stroke="currentColor" /></Icon></button>
        <button aria-label="Restore document"><Icon box="0 0 11 11" className="size-[11px]"><path d="M3 2.500V.500h7.500v7.500h-2M.5 2.500h8v8h-8zM3 5h3v3H3z" stroke="currentColor" /></Icon></button>
        <button aria-label="Close document"><Icon box="0 0 11 11" className="size-[11px]"><path d="M.5.500h3l2 2.500 2-2.500h3L7.500 5.500l3 5h-3l-2-2.500-2 2.500h-3l3-5z" stroke="currentColor" /></Icon></button>
      </div>
      <div className="absolute top-[59px] right-[19px] flex w-[86px] flex-col items-center">
        <button className="z-10 flex size-[54px] items-center justify-center border border-[#8b8e90] bg-linear-to-b from-[#f2f2f2] to-[#d8d8d9]">
          <span className="flex size-[34px] items-center justify-center bg-[#dcdee1] text-[12px] font-bold text-[#8e9195]">RIGHT</span>
        </button>
        <span className="-mt-1 h-2.5 w-[84px] rounded-[50%] bg-radial from-[#8c8c8c] to-transparent to-70%" />
      </div>
      <NavBar />
    </main>
  );
}

function DocumentTabs() {
  const layoutButton = "flex w-5 items-center justify-center border border-[#555] bg-linear-to-b from-[#dfe0e1] to-[#c4c5c7] text-[#333]";
  return (
    <div className="flex h-[22px] shrink-0 items-stretch border-t-2 border-[#d8d8d8] bg-linear-to-b from-[#c9c9c9] to-[#b4b4b4]">
      <button aria-label="Cascade" className={layoutButton}>
        <Icon box="0 0 16 16"><path d="M.5 1.500h10v7h-10zM2.500 4.500h10v7h-10zM5.500 7.500h10v7h-10zM5.500 9h10" fill="#eee" stroke="currentColor" /></Icon>
      </button>
      <button aria-label="Tile" className={layoutButton}>
        <Icon box="0 0 16 16"><path d="M.5 2.500h6v4h-6zM9.500 2.500h6v4h-6zM.5 9.500h6v4h-6zM9.500 9.500h6v4h-6zM.5 3.500h6M9.500 3.500h6M.5 10.500h6M9.500 10.500h6" stroke="currentColor" /></Icon>
      </button>
      <button aria-label="Tab menu" className={layoutButton}>
        <Icon box="0 0 8 4" className="mb-1.5 h-1 w-2"><path d="M0 4h8L4 0z" fill="currentColor" /></Icon>
      </button>
      <button className="mb-px w-[71px] rounded-b-md border border-t-0 border-[#777] bg-linear-to-b from-[#d2d2d2] to-[#bcbcbc] text-[12px] leading-[18px] text-[#222]">
        My Home
      </button>
      <button className="mb-px flex w-[77px] items-center gap-1 rounded-b-md border border-t-0 border-[#777] bg-white pl-[7px] text-[12px] leading-[18px] text-black">
        Front.ipt
        <Icon box="0 0 8 8" className="mb-1.5 size-2"><path d="M1 .500h2l1 2 1-2h2L5.500 4 7 7.500H5l-1-2-1 2H1L2.500 4z" stroke="#555" /></Icon>
      </button>
    </div>
  );
}

/* ---------- Status bar ---------- */

const bulb = (
  <>
    <circle cx="13" cy="8.500" r="2.500" fill="#ffe98a" stroke="#f0a020" strokeWidth="1.400" />
    <path d="M11.800 12h2.400v3.500h-2.400z" fill="#9aa4b8" />
  </>
);
const cross = <path d="M6 0v10M1 5h10M4.500 1.500L6 0l1.500 1.500M4.500 8.500L6 10l1.500-1.500M2.500 3.500L1 5l1.500 1.500M9.500 3.500L11 5 9.500 6.500" stroke="#333" strokeWidth="1.200" />;

function StatusBar() {
  return (
    <footer className="flex h-[25px] shrink-0 items-center border-t border-[#9d9d9d] bg-linear-to-b from-[#f6f6f6] to-[#b9b9b9] pl-px text-black">
      <span className="w-[448px]">For Help, press F1</span>
      <span className="mr-0.5 h-5 w-px bg-[#b5b5b5]" />
      <button aria-label="Snap to grid" aria-pressed="true" className="flex h-[22px] w-6 items-center justify-center border border-[#1f66b8] bg-[#b7d8f7]">
        <Icon>
          <path d="M.5.500h12v12H.500z" fill="#e6f0fa" stroke="#444" />
          <path d="M.5 4.500h12M.5 8.500h12M4.500.500v12M8.500.500v12" stroke="#444" />
          <path d="M7.500 16V9h8.500v7z" fill="#b7d8f7" />
          <path d="M9 15.500V12a2.800 2.800 0 0 1 5.500 0v3.500" stroke="#c02020" strokeWidth="2" />
        </Icon>
      </button>
      <div className="flex items-center gap-[5px] pl-[5px]">
        <button aria-label="Show constraints"><Icon>
          <path d="M.5 1.500h15v8H.500z" fill="#f2f2f2" stroke="#444" />
          <path d="M4 5l2 2 4-4" stroke={red} strokeWidth="1.300" />{bulb}
        </Icon></button>
        <button aria-label="Dimension display"><Icon>
          <path d="M2 3h4M4 1v4M7.500 5.500L10 .5M11 3h4M.5 8v8M15.500 8v8M1 12h14M3.500 10l-2 2 2 2M12.500 10l2 2-2 2" stroke="#333" />
        </Icon></button>
        <Caret />
        <button aria-label="Slice graphics" className="ml-1.5"><Icon>
          <path d="M.8 8.500l3-3H11v9H.800z" fill="#e9edf2" stroke="#444" />
          <path d="M10 5l5-4.500v10L10 15.500z" fill="#bfe0f8" stroke="#1e78c0" strokeWidth="1.200" />
        </Icon></button>
        <button aria-label="Show degrees of freedom" className="ml-[3px]"><Icon>{cross}{bulb}</Icon></button>
        <button aria-label="Relax mode" className="ml-[3px]"><Icon>
          <path d="M2 4l10 10" stroke={red} strokeWidth="1.200" />
          <path d="M.5 2.500h3v3h-3zM10.500 12.500h3v3h-3z" fill="#fff" stroke={red} />
          <path d="M11 .5v9M6.500 5h9M9.500 2L11 .5 12.500 2M9.500 8l1.500 1.500L12.500 8" stroke="#444" strokeWidth="1.200" />
        </Icon></button>
      </div>
      <div className="ml-auto flex gap-8 pr-6">
        <span>1</span>
        <span>1</span>
      </div>
    </footer>
  );
}

export default function App() {
  return (
    <div className="flex h-screen flex-col overflow-hidden bg-[#f0f0f0] font-['Open_Sans',sans-serif] text-[11px] text-[#2c2c2c]">
      <Header />
      <Ribbon />
      <div className="flex min-h-0 flex-1">
        <ModelBrowser />
        <div className="flex min-w-0 flex-1 flex-col">
          <Canvas />
          <DocumentTabs />
        </div>
      </div>
      <StatusBar />
    </div>
  );
}
